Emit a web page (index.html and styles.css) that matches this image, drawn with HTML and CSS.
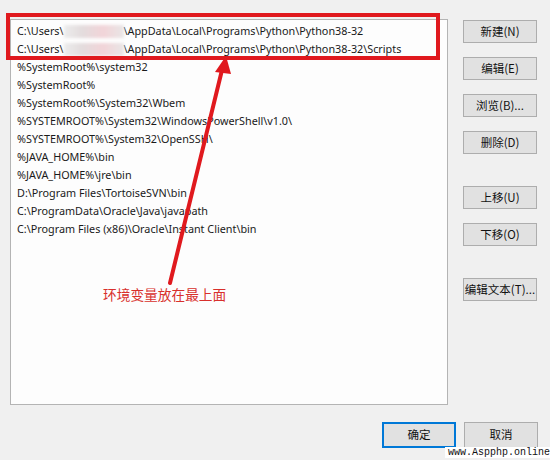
FILE: index.html
```html
<!DOCTYPE html>
<html lang="zh-CN">
<head>
<meta charset="utf-8">
<title>编辑环境变量</title>
<link rel="stylesheet" href="styles.css">
</head>
<body>
<div class="dialog">
  <div class="main">
    <div class="listbox">
      <div class="row">C:\Users\<span class="blur"></span>\AppData\Local\Programs\Python\Python38-32</div>
      <div class="row">C:\Users\<span class="blur"></span>\AppData\Local\Programs\Python\Python38-32\Scripts</div>
      <div class="row">%SystemRoot%\system32</div>
      <div class="row">%SystemRoot%</div>
      <div class="row">%SystemRoot%\System32\Wbem</div>
      <div class="row">%SYSTEMROOT%\System32\WindowsPowerShell\v1.0\</div>
      <div class="row">%SYSTEMROOT%\System32\OpenSSH\</div>
      <div class="row">%JAVA_HOME%\bin</div>
      <div class="row">%JAVA_HOME%\jre\bin</div>
      <div class="row">D:\Program Files\TortoiseSVN\bin</div>
      <div class="row">C:\ProgramData\Oracle\Java\javapath</div>
      <div class="row">C:\Program Files (x86)\Oracle\Instant Client\bin</div>
    </div>
    <div class="side">
      <div class="group">
        <button class="btn">新建(N)</button>
        <button class="btn">编辑(E)</button>
        <button class="btn">浏览(B)...</button>
        <button class="btn">删除(D)</button>
      </div>
      <div class="group">
        <button class="btn">上移(U)</button>
        <button class="btn">下移(O)</button>
      </div>
      <div class="group">
        <button class="btn">编辑文本(T)...</button>
      </div>
    </div>
  </div>
  <div class="footer">
    <button class="btn default">确定</button>
    <button class="btn">取消</button>
  </div>
</div>

<div class="highlight"></div>
<svg class="arrow" width="550" height="460" viewBox="0 0 550 460">
  <line x1="170" y1="283" x2="222" y2="70" stroke="#e0191e" stroke-width="4" stroke-linecap="round"/>
  <polygon points="226,56 215,72 231,74" fill="#e0191e"/>
</svg>
<div class="note">环境变量放在最上面</div>
<div class="watermark">www.Aspphp.online</div>
</body>
</html>
```

FILE: styles.css
```css
html, body {
  margin: 0;
  padding: 0;
}
body {
  width: 550px;
  height: 460px;
  background: #f0f0f0;
  font-family: "Noto Sans", "Noto Sans CJK SC", sans-serif;
  color: #111;
  overflow: hidden;
  position: relative;
}
.dialog {
  display: flex;
  flex-direction: column;
  padding: 19px 0 0 10px;
}
.main {
  display: flex;
  gap: 15px;
}
.listbox {
  width: 436px;
  height: 382px;
  background: #fdfdfd;
  border: 1px solid #b4b4b4;
  padding-top: 2px;
  box-sizing: content-box;
  display: flex;
  flex-direction: column;
}
.row {
  height: 18px;
  line-height: 18px;
  padding-left: 6px;
  font-size: 10.8px;
  color: #1a1a1a;
  white-space: nowrap;
  display: flex;
  align-items: center;
}
.blur {
  display: inline-block;
  width: 60px;
  height: 13px;
  background: linear-gradient(90deg, #ececec 0%, #e3dcdd 30%, #f2d4d8 65%, #e9e6e6 100%);
  filter: blur(1.5px);
}
.side {
  display: flex;
  flex-direction: column;
  gap: 32px;
  padding-top: 1px;
}
.group {
  display: flex;
  flex-direction: column;
  gap: 14px;
}
.btn {
  width: 74px;
  height: 23px;
  padding: 0;
  background: #e1e1e1;
  border: 1px solid #adadad;
  font-family: "Noto Sans CJK SC", "Noto Sans", sans-serif;
  font-size: 11.5px;
  color: #111;
  line-height: 1;
}
.btn.default {
  border: 2px solid #0078d7;
}
.footer {
  display: flex;
  justify-content: flex-end;
  gap: 8px;
  padding: 17px 12px 0 0;
}
.footer .btn {
  height: 26px;
}
.highlight {
  position: absolute;
  left: 6px;
  top: 13px;
  width: 426px;
  height: 39px;
  border: 4px solid #e0191e;
}
.arrow {
  position: absolute;
  left: 0;
  top: 0;
}
.note {
  position: absolute;
  left: 103px;
  top: 285px;
  font-family: "Noto Sans CJK SC", sans-serif;
  font-size: 13.7px;
  line-height: 19px;
  color: #d8302c;
}
.watermark {
  position: absolute;
  right: 0;
  bottom: 2px;
  background: #fff;
  padding: 0 0 0 3px;
  font-family: "Liberation Mono", monospace;
  font-size: 10px;
  line-height: 11px;
  color: #111;
}
```
